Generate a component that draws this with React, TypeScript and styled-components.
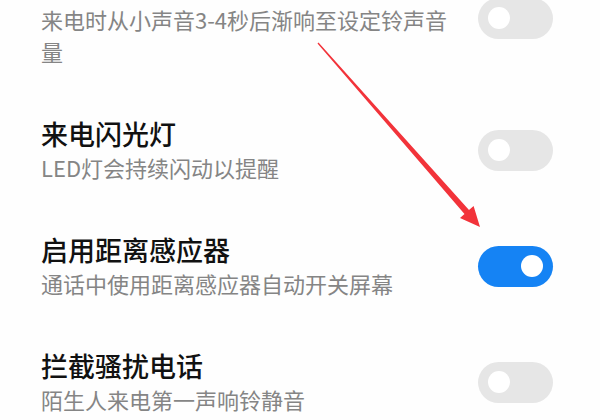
import React from 'react';
import styled, { createGlobalStyle } from 'styled-components';

interface ISetting {
    title: string;
    desc: string;
    on: boolean;
}

const settings: ISetting[] = [
    { title: '来电铃声渐强', desc: '来电时从小声音3-4秒后渐响至设定铃声音量', on: false },
    { title: '来电闪光灯', desc: 'LED灯会持续闪动以提醒', on: false },
    { title: '启用距离感应器', desc: '通话中使用距离感应器自动开关屏幕', on: true },
    { title: '拦截骚扰电话', desc: '陌生人来电第一声响铃静音', on: false },
];

const GlobalStyle = createGlobalStyle`
    html, body {
        margin: 0;
        padding: 0;
        background: #fefefe;
    }
    body {
        font-family: "Noto Sans CJK SC", "Noto Sans", sans-serif;
        overflow: hidden;
    }
`;

export default function App() {
    return (
        <>
            <GlobalStyle />
            <StyledScreen>
                <StyledList>
                    {settings.map((s) => (
                        <StyledRow key={s.title}>
                            <StyledText>
                                <StyledTitle>{s.title}</StyledTitle>
                                <StyledDesc>{s.desc}</StyledDesc>
                            </StyledText>
                            <StyledSwitch $on={s.on}>
                                <StyledKnob />
                            </StyledSwitch>
                        </StyledRow>
                    ))}
                </StyledList>
                {/* red annotation arrow pointing at the proximity sensor switch */}
                <StyledArrow viewBox="0 0 600 420">
                    <polygon
                        points="317.5,43.4 318.5,42.6 469,210 473.6,206 480,227 460,218 464.5,214"
                        fill="#f2333a"
                    />
                </StyledArrow>
            </StyledScreen>
        </>
    );
}

const StyledScreen = styled.div`
    position: relative;
    width: 600px;
    height: 420px;
    overflow: hidden;
`;

const StyledList = styled.div`
    display: flex;
    flex-direction: column;
    margin-top: -56px;
    padding: 0 47px 0 41px;
`;

const StyledRow = styled.div`
    display: flex;
    align-items: center;
    justify-content: space-between;
    padding: 25px 0;
`;

const StyledText = styled.div`
    display: flex;
    flex-direction: column;
    width: 414px;
`;

const StyledTitle = styled.div`
    font-size: 27px;
    line-height: 34px;
    font-weight: 500;
    color: #111;
`;

const StyledDesc = styled.div`
    font-size: 22px;
    line-height: 32px;
    color: #858585;
`;

const StyledSwitch = styled.div<{ $on: boolean }>`
    flex: none;
    display: flex;
    align-items: center;
    justify-content: ${({ $on }) => ($on ? 'flex-end' : 'flex-start')};
    box-sizing: border-box;
    width: 75px;
    height: 41px;
    padding: 0 10px;
    border-radius: 21px;
    background: ${({ $on }) => ($on ? '#1583f4' : '#e6e6e6')};
`;

const StyledKnob = styled.div`
    width: 22px;
    height: 22px;
    border-radius: 50%;
    background: #fff;
`;

const StyledArrow = styled.svg`
    position: absolute;
    inset: 0;
    width: 600px;
    height: 420px;
    pointer-events: none;
`;
